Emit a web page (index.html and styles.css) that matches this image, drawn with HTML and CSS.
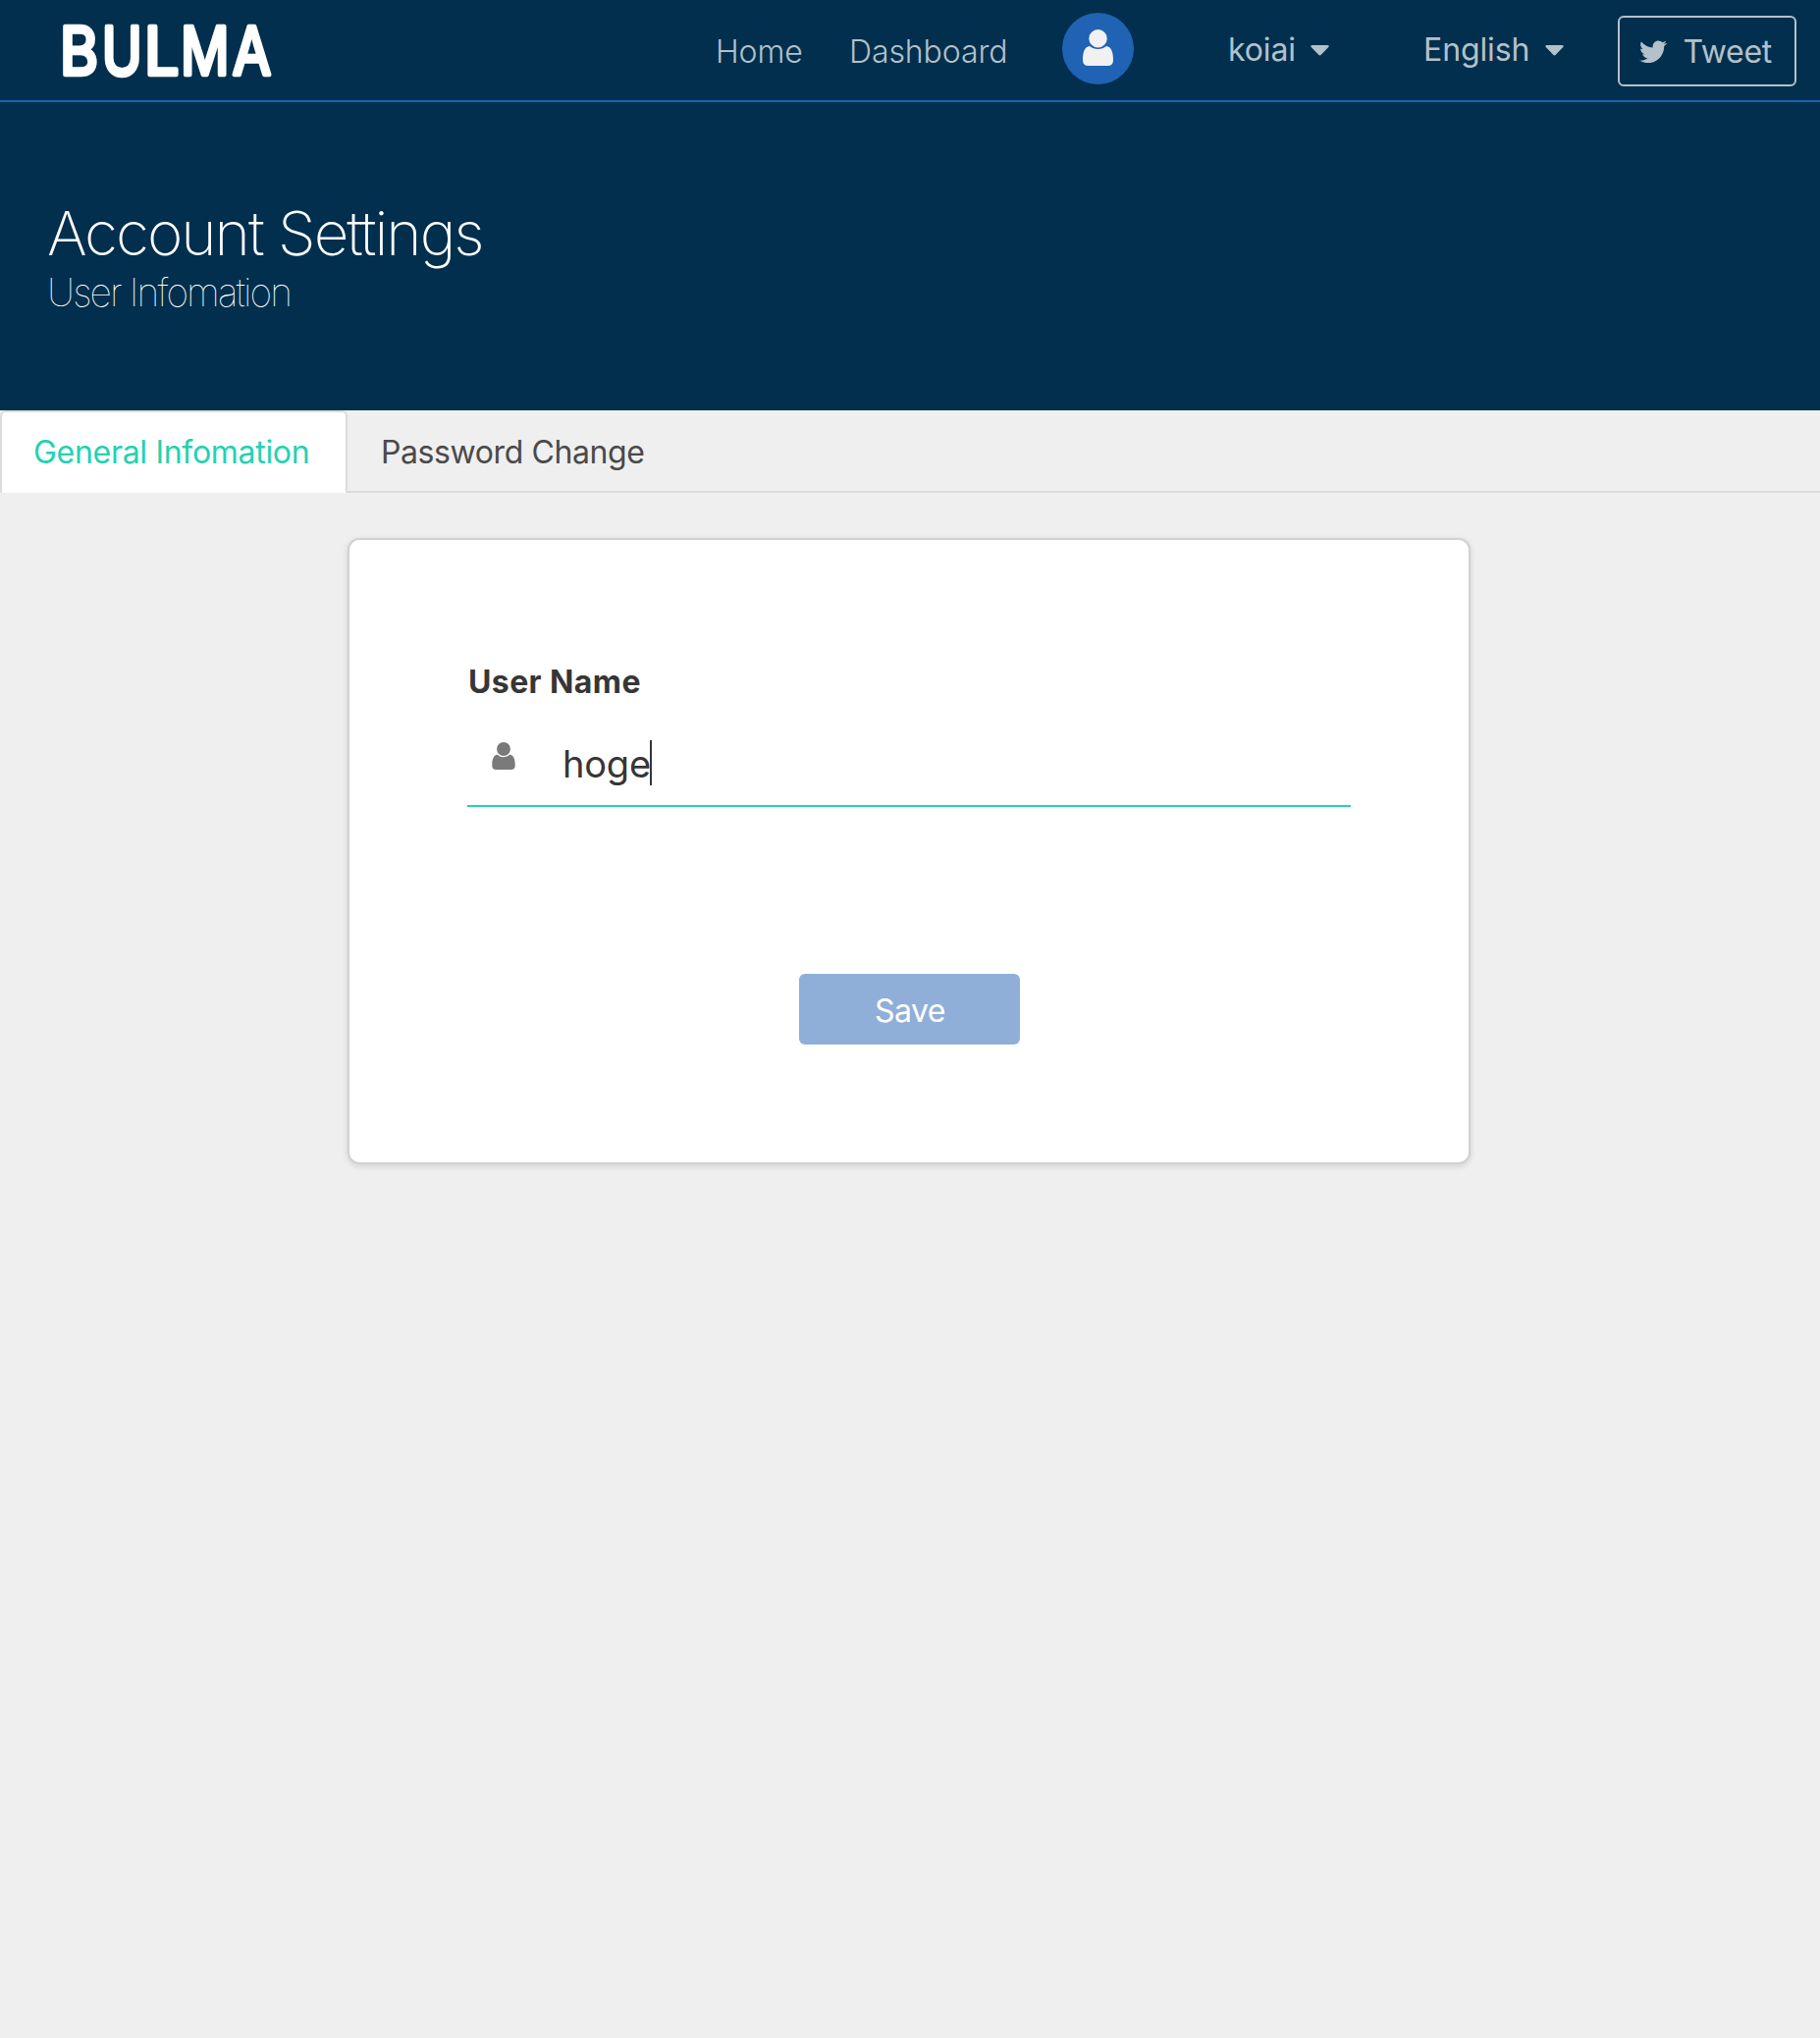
FILE: index.html
```html
<!DOCTYPE html>
<html lang="en">
<head>
<meta charset="utf-8">
<title>Account Settings</title>
<link rel="stylesheet" href="styles.css">
</head>
<body>
<header class="hero">
  <nav class="navbar">
    <a class="brand" aria-label="BULMA">
      <svg width="240" height="90" viewBox="0 0 240 90"><text class="logo-text" y="65.500"><tspan x="11" textLength="39" lengthAdjust="spacingAndGlyphs">B</tspan><tspan x="53.700" textLength="41" lengthAdjust="spacingAndGlyphs">U</tspan><tspan x="97" textLength="35.500" lengthAdjust="spacingAndGlyphs">L</tspan><tspan x="134" textLength="49.500" lengthAdjust="spacingAndGlyphs">M</tspan><tspan x="187" textLength="39" lengthAdjust="spacingAndGlyphs">A</tspan></text></svg>
    </a>
    <a class="nav-link home">Home</a>
    <a class="nav-link dashboard">Dashboard</a>
    <span class="avatar">
      <svg width="31" height="37" viewBox="0 0 31 37"><circle cx="15.5" cy="9.3" r="9.2"/><path d="M7 17C2 17.500 0 23 0 31Q0 37 5.500 37H25.500Q31 37 31 31C31 23 29 17.500 24 17Q20.500 20 15.500 20T7 17Z"/></svg>
    </span>
    <a class="dropdown user">koiai<svg width="19" height="11" viewBox="0 0 19 11"><path d="M1.500 0H17.500Q19.500.500 18.300 2L10.800 9.800Q9.500 11 8.200 9.800L.700 2Q-.500.500 1.500 0Z"/></svg></a>
    <a class="dropdown language">English<svg width="19" height="11" viewBox="0 0 19 11"><path d="M1.500 0H17.500Q19.500.500 18.300 2L10.800 9.800Q9.500 11 8.200 9.800L.700 2Q-.500.500 1.500 0Z"/></svg></a>
    <a class="tweet">
      <svg width="28" height="23" viewBox="0 0 24 19.500"><path d="M23.954 2.569c-.885.389-1.830.654-2.825.775 1.014-.611 1.794-1.574 2.163-2.723-.951.555-2.005.959-3.127 1.184-.896-.959-2.173-1.559-3.591-1.559-2.717 0-4.920 2.203-4.920 4.917 0 .390.045.765.127 1.124C7.691 6.094 4.066 4.130 1.640 1.161c-.427.722-.666 1.561-.666 2.475 0 1.710.870 3.213 2.188 4.096-.807-.026-1.566-.248-2.228-.616v.061c0 2.385 1.693 4.374 3.946 4.827-.413.111-.849.171-1.296.171-.314 0-.615-.030-.916-.086.631 1.953 2.445 3.377 4.604 3.417-1.680 1.319-3.809 2.105-6.102 2.105-.390 0-.779-.023-1.170-.067 2.189 1.394 4.768 2.209 7.557 2.209 9.054 0 13.999-7.496 13.999-13.986 0-.209 0-.420-.015-.630.961-.689 1.800-1.560 2.460-2.548z"/></svg>
      <span>Tweet</span>
    </a>
  </nav>
  <div class="hero-body">
    <h1 class="title">Account Settings</h1>
    <h2 class="subtitle">User Infomation</h2>
  </div>
</header>
<div class="tabs">
  <a class="tab active">General Infomation</a>
  <a class="tab">Password Change</a>
</div>
<main class="card">
  <label class="label">User Name</label>
  <div class="field">
    <svg width="24" height="28" viewBox="0 0 31 37"><circle cx="15.5" cy="9.3" r="9.2"/><path d="M7 17C2 17.500 0 23 0 31Q0 37 5.500 37H25.500Q31 37 31 31C31 23 29 17.500 24 17Q20.500 20 15.500 20T7 17Z"/></svg>
    <span class="value">hoge</span><span class="cursor"></span>
  </div>
  <button class="save">Save</button>
</main>
</body>
</html>
```
FILE: styles.css
```css
* { box-sizing: border-box; }
body { margin: 0; min-height: 2076px; background: #efefef; color: #363636; font-family: Inter, "Liberation Sans", sans-serif; font-size: 32px; line-height: 40px; }
svg { display: block; flex: none; fill: currentColor; }
.hero { height: 418px; background: #022f4d; color: #fff; }
.navbar { display: flex; align-items: flex-start; height: 104px; border-bottom: 2px solid #1e60b4; color: #b3c1ca; }
.brand { width: 240px; margin: 10px 439px 0 50px; color: #fff; }
.logo-text { font-size: 67px; font-weight: 400; stroke: #fff; stroke-width: 4.5px; stroke-linejoin: round; }
.nav-link { margin-top: 33px; font-weight: 300; letter-spacing: -0.1px; }
.home { width: 136px; }
.dashboard { width: 217px; }
.avatar { display: flex; justify-content: center; align-items: flex-start; width: 73px; height: 73px; margin-top: 13px; padding-top: 17px; border-radius: 50%; background: #2062b4; color: #f1f1f1; }
.dropdown { display: flex; align-items: flex-start; justify-content: space-between; margin-top: 31px; letter-spacing: -0.1px; }
.dropdown svg { margin-top: 15px; }
.user { width: 103px; margin-left: 96px; }
.language { width: 143px; margin-left: 96px; }
.tweet { display: flex; justify-content: space-between; width: 182px; height: 72px; margin: 16px 0 0 55px; padding: 15px 23px 0 20px; border: 2px solid #b3c1ca; border-radius: 6px; letter-spacing: -0.3px; }
.tweet svg { margin-top: 8px; }
.hero-body { padding: 102px 48px 0; }
.title { margin: 0; font-size: 62px; font-weight: 200; line-height: 64px; letter-spacing: -2px; }
.subtitle { margin: 4px 0 0; font-size: 39px; font-weight: 100; line-height: 48px; letter-spacing: -1.9px; }
.tabs { display: flex; height: 84px; border-bottom: 2px solid #dbdbdb; }
.tab { height: 84px; padding: 23px 34px; color: #4a4a4a; letter-spacing: -0.4px; white-space: nowrap; }
.tab.active { width: 354px; padding: 21px 0 0 32px; border: 2px solid #dbdbdb; border-bottom: 0; border-radius: 6px 6px 0 0; background: #fff; color: #24d1b2; letter-spacing: -0.3px; }
.card { display: flex; flex-direction: column; width: 1144px; height: 638px; margin: 46px 0 0 354px; padding: 122px 120px 0; border: 2px solid #d1d1d1; border-radius: 12px; background: #fff; box-shadow: 0 2px 6px rgba(0,0,0,.12); }
.label { height: 58px; padding: 3px 0 0 1px; font-weight: 700; letter-spacing: 0.4px; }
.field { display: flex; height: 92px; padding-left: 25px; border-bottom: 2px solid #24d1b2; }
.field svg { margin-top: 26px; color: #7a7a7a; }
.value { width: 89px; margin: 25px 0 0 48px; font-size: 38px; line-height: 46px; letter-spacing: -0.2px; }
.cursor { width: 2px; height: 46px; margin-top: 24px; background: #363636; }
.save { align-self: center; width: 225px; height: 72px; margin-top: 170px; padding: 4px 0 0 2px; border: 0; border-radius: 6px; background: #8fafd9; color: #fff; font: inherit; letter-spacing: -0.5px; }
```
